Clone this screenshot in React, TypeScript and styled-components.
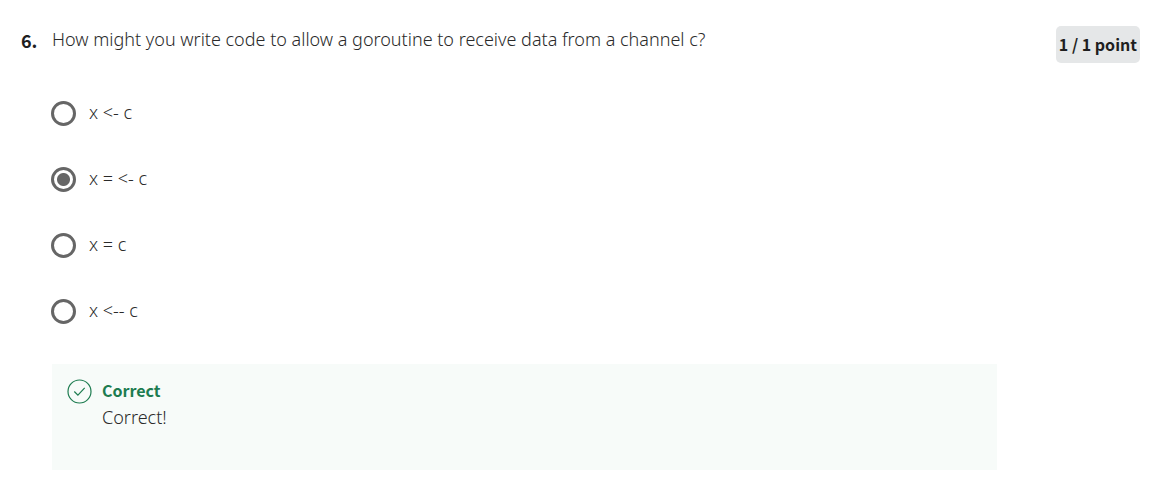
import React from "react";
import styled, { createGlobalStyle } from "styled-components";

const GlobalStyle = createGlobalStyle`
  * { box-sizing: border-box; }
  body {
    margin: 0;
    background: #fff;
    color: #2a2a2a;
    font-family: "Noto Sans", "Open Sans", sans-serif;
  }
`;

const Question = styled.main`
  display: grid;
  grid-template-columns: 31px minmax(0, 1fr) auto;
  padding: 26px 16px 32px 21px;
`;

const Strong = styled.strong`
  font-family: "Noto Sans CJK SC", "Open Sans", sans-serif;
  font-size: 16px;
  line-height: 22px;
  font-weight: 700;
  color: #1f1f1f;
`;

const Ordinal = styled(Strong)`
  padding-top: 3px;
  font-size: 18px;
`;

const Points = styled(Strong)`
  padding: 7px 3px 8px;
  border-radius: 5px;
  background: #e5e7e8;
  align-self: start;
  white-space: nowrap;
`;

const Body = styled.fieldset`
  min-width: 0;
  margin: 0;
  padding: 0;
  border: 0;
`;

const Prompt = styled.legend`
  padding: 0;
  font-size: 18px;
  line-height: 27px;
  font-weight: 300;
`;

const Options = styled.div`
  display: flex;
  flex-direction: column;
  align-items: flex-start;
  gap: 41px;
  padding-top: 48px;
`;

const Option = styled.label`
  display: flex;
  align-items: flex-start;
  gap: 13px;
  height: 25px;
  font-size: 18px;
  line-height: 22px;
  font-weight: 300;
`;

const Radio = styled.input`
  appearance: none;
  width: 25px;
  height: 25px;
  margin: 0 0 0 -1px;
  border: 3px solid #666;
  border-radius: 50%;
  background: #fff;

  &:checked {
    background: radial-gradient(circle, #666 6px, #fff 7px);
  }
`;

const Feedback = styled.section`
  display: flex;
  gap: 10px;
  min-height: 106px;
  margin: 40px 59px 0 0;
  padding: 15px;
  background: #f7fbf9;
`;

const FeedbackTitle = styled(Strong)`
  display: block;
  color: #1d7c50;
`;

const FeedbackText = styled.p`
  margin: 2px 0 0;
  font-size: 18px;
  line-height: 28px;
  font-weight: 300;
`;

const answers = ["x <- c", "x = <- c", "x = c", "x <-- c"];

function CheckIcon() {
  return (
    <svg width="25" height="25" viewBox="0 0 25 25" fill="none" stroke="#1d7c50" aria-hidden="true">
      <circle cx="12.5" cy="12.5" r="11.5" strokeWidth="1.2" />
      <path d="M7.3 12.5l3.6 3.6 6.8-7.3" strokeWidth="1.2" />
    </svg>
  );
}

export default function App() {
  return (
    <>
      <GlobalStyle />
      <Question>
        <Ordinal>6.</Ordinal>
        <Body>
          <Prompt>How might you write code to allow a goroutine to receive data from a channel c?</Prompt>
          <Options>
            {answers.map((answer, index) => (
              <Option key={answer}>
                <Radio type="radio" name="answer" value={answer} defaultChecked={index === 1} />
                <span>{answer}</span>
              </Option>
            ))}
          </Options>
          <Feedback>
            <CheckIcon />
            <div>
              <FeedbackTitle>Correct</FeedbackTitle>
              <FeedbackText>Correct!</FeedbackText>
            </div>
          </Feedback>
        </Body>
        <Points>1 / 1 point</Points>
      </Question>
    </>
  );
}
